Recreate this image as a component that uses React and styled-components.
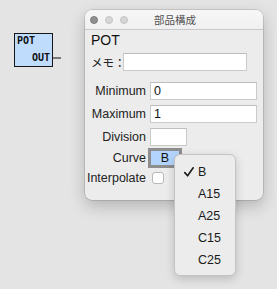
import React from 'react';
import styled, { createGlobalStyle } from 'styled-components';

//CSS
const GlobalStyle = createGlobalStyle`
	html, body {margin:0; padding:0; background:#e4e4e4;}
	body {font-family: "Liberation Sans", Arial, "Noto Sans CJK JP", sans-serif; color:#1e1e1e;}
`;

const Desktop = styled.div`
	position: relative;
	width: 277px;
	height: 289px;
	overflow: hidden;
	background: #e4e4e4;
`;

// patch block on the canvas
const Block = styled.div`
	position: absolute;
	left: ${p => p.$x}px;
	top: ${p => p.$y}px;
	width: 37px;
	height: 32px;
	border: 1px solid #161616;
	background: #bfdcfd;
	display: flex;
	flex-direction: column;
	justify-content: space-between;
	padding: 1px 2px 3px 2px;
	box-sizing: border-box;
	font-family: "DejaVu Sans Mono", "Liberation Mono", monospace;
	font-weight: bold;
	font-size: 10px;
	line-height: 11px;
	color: #101010;
	width: 39px;
	height: 34px;
`;

const Port = styled.div`
	position: relative;
	align-self: ${p => p.$right ? 'flex-end' : 'flex-start'};
`;

const Wire = styled.span`
	position: absolute;
	left: 100%;
	top: 5px;
	margin-left: 3px;
	width: 8px;
	height: 2px;
	background: #7a7a7a;
`;

const Window = styled.div`
	position: absolute;
	left: 85px;
	top: 10px;
	width: 178px;
	height: 190px;
	border-radius: 7px;
	background: #ececec;
	box-shadow: 0 0 0 0.5px rgba(0,0,0,0.22), 0 6px 16px rgba(0,0,0,0.22);
	overflow: hidden;
	display: flex;
	flex-direction: column;
`;

const TitleBar = styled.div`
	position: relative;
	height: 19px;
	border-bottom: 1px solid #c9c9c9;
	background: linear-gradient(#f7f7f7, #f0f0f0);
	display: flex;
	align-items: center;
	justify-content: center;
`;

const Lights = styled.div`
	position: absolute;
	left: 5px;
	top: 6px;
	display: flex;
	gap: 7px;
`;

const Light = styled.span`
	width: 8px;
	height: 8px;
	border-radius: 50%;
	box-sizing: border-box;
	background: ${p => p.$dark ? '#8f8f8f' : '#d6d6d6'};
	border: 0.5px solid ${p => p.$dark ? '#7e7e7e' : '#c4c4c4'};
`;

const Title = styled.div`
	font-family: "Noto Sans CJK JP", sans-serif;
	font-size: 10.5px;
	color: #505050;
	margin-left: 2px;
`;

const Body = styled.div`
	flex: 1;
	padding: 2px 6px 0 4px;
`;

const Heading = styled.div`
	font-size: 14px;
	line-height: 16px;
	padding-left: 2px;
	color: #111;
`;

const MemoRow = styled.div`
	display: flex;
	align-items: center;
	margin-top: 5px;
	padding-left: 2px;
	gap: 3px;
`;

const MemoLabel = styled.span`
	font-family: "Noto Sans CJK JP", sans-serif;
	font-size: 11.5px;
	color: #222;
	width: 29px;
	white-space: nowrap;
`;

const TextInput = styled.div`
	width: ${p => p.$w}px;
	height: 18px;
	box-sizing: border-box;
	background: #fff;
	border: 1px solid #cacaca;
	border-top-color: #bdbdbd;
	font-size: 12.5px;
	line-height: 16px;
	padding-left: 3px;
	color: #111;
`;

const Form = styled.div`
	margin-top: 11px;
	display: flex;
	flex-direction: column;
`;

const Row = styled.div`
	display: grid;
	grid-template-columns: 57px auto;
	column-gap: ${p => p.$colGap || 4}px;
	align-items: center;
	margin-top: ${p => p.$top || 0}px;
	height: ${p => p.$h}px;
`;

const Label = styled.span`
	justify-self: end;
	white-space: nowrap;
	font-size: 12.5px;
	color: #222;
`;

const PopupButton = styled.div`
	width: 34px;
	height: 20px;
	box-sizing: border-box;
	border: 3px solid #8e8e8e;
	background: #b3d4fc;
	font-size: 12.5px;
	line-height: 14px;
	text-align: center;
	color: #111;
`;

const Checkbox = styled.span`
	width: 12px;
	height: 12px;
	box-sizing: border-box;
	margin-left: 2px;
	background: #fff;
	border: 1px solid #b9b9b9;
	border-radius: 3px;
`;

const Menu = styled.div`
	position: absolute;
	left: 174px;
	top: 154px;
	width: 62px;
	padding: 6px 0 4px;
	box-sizing: border-box;
	border-radius: 6px;
	background: #ececec;
	border: 0.5px solid #c3c3c3;
	box-shadow: 0 3px 10px rgba(0,0,0,0.18);
`;

const MenuItem = styled.div`
	height: 22px;
	display: flex;
	align-items: center;
	padding-left: 9px;
	font-size: 12.5px;
	color: #1a1a1a;
`;

const Check = styled.span`
	width: 14px;
	display: flex;
	align-items: center;
`;

const curves = ['B', 'A15', 'A25', 'C15', 'C25'];

const CheckMark = () => (
	<svg width="10" height="10" viewBox="0 0 10 10">
		<path d="M0.8 5.6 L3.6 8.8 L9.2 0.8" fill="none" stroke="#1a1a1a" strokeWidth="1.6" strokeLinecap="round" strokeLinejoin="round" />
	</svg>
);

export default function App() {
	return (
		<Desktop>
			<GlobalStyle />
			<Block $x={14} $y={33}>
				<Port>POT</Port>
				<Port $right>OUT<Wire /></Port>
			</Block>

			<Window>
				<TitleBar>
					<Lights>
						<Light $dark />
						<Light />
						<Light />
					</Lights>
					<Title>部品構成</Title>
				</TitleBar>
				<Body>
					<Heading>POT</Heading>
					<MemoRow>
						<MemoLabel>メモ：</MemoLabel>
						<TextInput $w={124} />
					</MemoRow>
					<Form>
						<Row $h={18}>
							<Label>Minimum</Label>
							<TextInput $w={107}>0</TextInput>
						</Row>
						<Row $h={18} $top={5}>
							<Label>Maximum</Label>
							<TextInput $w={107}>1</TextInput>
						</Row>
						<Row $h={18} $top={5}>
							<Label>Division</Label>
							<TextInput $w={37} />
						</Row>
						<Row $h={20} $top={2} $colGap={2}>
							<Label>Curve</Label>
							<PopupButton>B</PopupButton>
						</Row>
						<Row $h={15} $top={2}>
							<Label>Interpolate</Label>
							<Checkbox />
						</Row>
					</Form>
				</Body>
			</Window>

			<Menu>
				{curves.map(c => (
					<MenuItem key={c}>
						<Check>{c === 'B' && <CheckMark />}</Check>
						{c}
					</MenuItem>
				))}
			</Menu>
		</Desktop>
	);
}
